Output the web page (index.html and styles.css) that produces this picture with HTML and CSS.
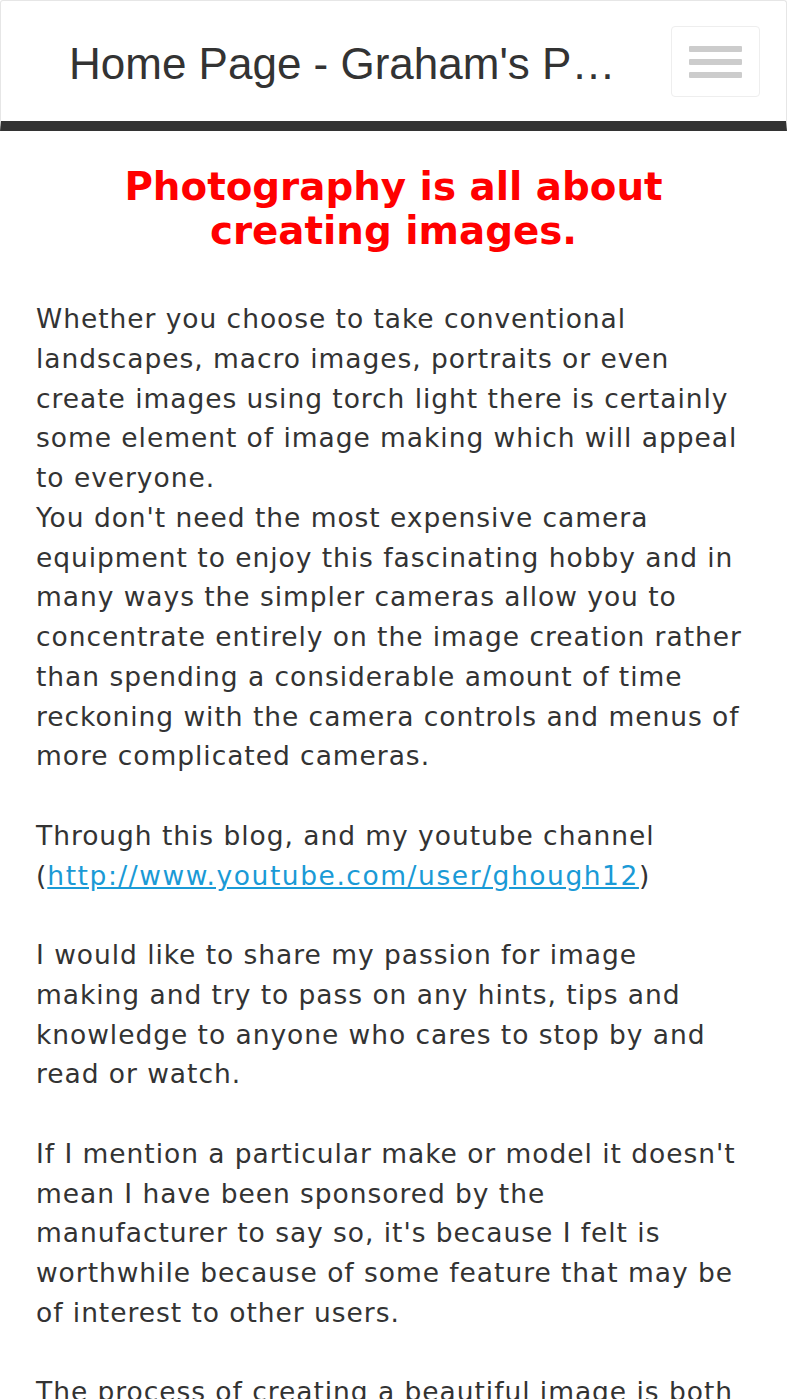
FILE: index.html
```html
<!DOCTYPE html>
<html lang="en">
<head>
    <meta charset="UTF-8">
    <meta name="viewport" content="width=device-width, initial-scale=1.0">
    <title>Home Page - Graham's Photography</title>
    <link rel="stylesheet" href="styles.css">
</head>
<body>

    <header class="topbar">
        <div class="title">Home Page - Graham's Photography Blog</div>
        <button class="menu-btn" aria-label="Menu">
            <span></span>
            <span></span>
            <span></span>
        </button>
    </header>

    <main class="content">
        <h1>Photography is all about creating images.</h1>

        <p>Whether you choose to take conventional landscapes, macro images, portraits or even create images using torch light there is certainly some element of image making which will appeal to everyone.<br>
        You don't need the most expensive camera equipment to enjoy this fascinating hobby and in many ways the simpler cameras allow you to concentrate entirely on the image creation rather than spending a considerable amount of time reckoning with the camera controls and menus of more complicated cameras.</p>

        <p>Through this blog, and my youtube channel (<a href="http://www.youtube.com/user/ghough12">http://www.youtube.com/user/ghough12</a>)</p>

        <p>I would like to share my passion for image making and try to pass on any hints, tips and knowledge to anyone who cares to stop by and read or watch.</p>

        <p>If I mention a particular make or model it doesn't mean I have been sponsored by the manufacturer to say so, it's because I felt is worthwhile because of some feature that may be of interest to other users.</p>

        <p>The process of creating a beautiful image is both rewarding and satisfying, and I hope you enjoy the journey as much as I do.</p>
    </main>

</body>
</html>
```

FILE: styles.css
```css
/* General Styles */
body, html {
    margin: 0;
    padding: 0;
    background-color: #ffffff;
    color: #333;
}

body {
    font-family: "DejaVu Sans", Verdana, sans-serif;
}

/* Header Styles */
.topbar {
    display: flex;
    align-items: center;
    justify-content: space-between;
    height: 131px;
    border: 1px solid #e6e6e6;
    border-bottom: 10px solid #333;
    border-radius: 3px 3px 0 0;
    padding: 0 26px 0 68px;
    box-sizing: border-box;
}

.topbar .title {
    font-family: "Liberation Sans", Arial, sans-serif;
    font-size: 44px;
    color: #333;
    white-space: nowrap;
    overflow: hidden;
    text-overflow: ellipsis;
    max-width: 560px;
    margin-top: 6px;
}

.menu-btn {
    display: flex;
    flex-direction: column;
    justify-content: center;
    gap: 7px;
    width: 89px;
    height: 71px;
    padding: 0 17px;
    margin-top: 1px;
    background: #fff;
    border: 1px solid #eee;
    border-radius: 4px;
    box-sizing: border-box;
}

.menu-btn span {
    display: block;
    height: 6px;
    width: 100%;
    background-color: #ccc;
    border-radius: 1px;
}

/* Content */
.content {
    padding: 34px 44px 0 36px;
}

.content h1 {
    margin: 0 0 46px 0;
    text-align: center;
    font-size: 38.8px;
    line-height: 44px;
    font-weight: bold;
    color: #ff0000;
    padding: 0 62px 0 70px;
}

.content p {
    margin: 0 0 39.75px 0;
    font-size: 26.5px;
    line-height: 39.75px;
    letter-spacing: 0.95px;
    color: #333;
}

.content a {
    color: #1a9ad6;
    letter-spacing: 1.55px;
}
```
